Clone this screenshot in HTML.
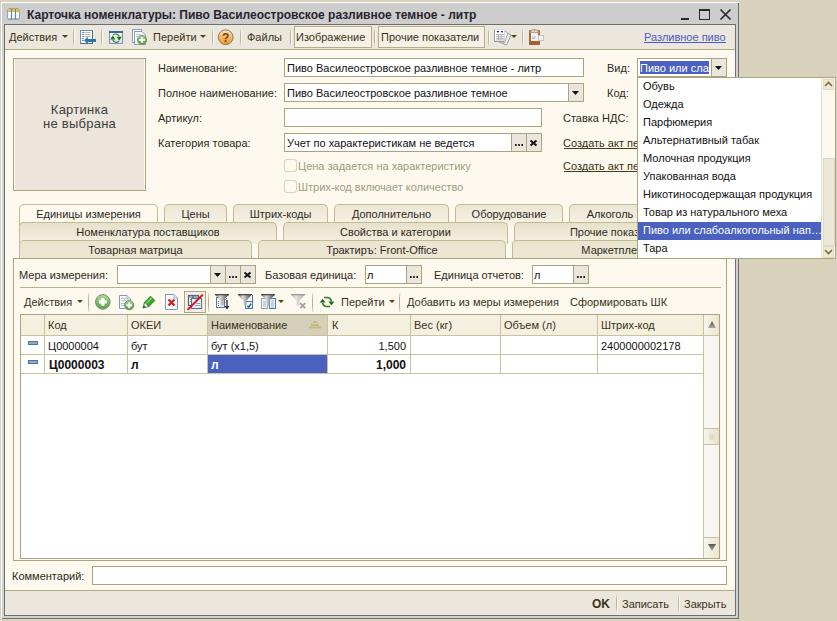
<!DOCTYPE html><html><head><meta charset="utf-8"><style>
html,body{margin:0;padding:0;}
body{width:837px;height:621px;overflow:hidden;position:relative;background:#d8d2bd;font-family:"Liberation Sans",sans-serif;}
.a{position:absolute;}
.t{position:absolute;white-space:nowrap;font-family:"Liberation Sans",sans-serif;color:#2e2a22;}
</style></head><body>
<div class="a" style="left:1px;top:2px;width:738px;height:617px;background:#ffffff;"></div>
<div class="a" style="left:2px;top:3px;width:737px;height:616px;background:#6f6f6f;"></div>
<div class="a" style="left:2px;top:3px;width:736px;height:615px;background:#d0d0d0;"></div>
<div class="a" style="left:2px;top:3px;width:736px;height:21px;background:#cdcdcd;"></div>
<div class="a" style="left:4px;top:24px;width:732px;height:592px;background:#6f6f6f;"></div>
<div class="a" style="left:5px;top:25px;width:730px;height:590px;background:#fdf9ef;"></div>
<svg class="a" style="left:7px;top:8px" width="13" height="12" viewBox="0 0 13 12">
<rect x="0.5" y="0.5" width="12" height="11" rx="1.5" fill="#6b7f93"/>
<rect x="1" y="1" width="3" height="2" fill="#f2c500"/><rect x="5" y="1" width="3" height="2" fill="#f2c500"/><rect x="9" y="1" width="3" height="2" fill="#f2c500"/>
<rect x="1" y="3.5" width="3" height="7" fill="#eef8fb"/><rect x="5" y="3.5" width="3" height="7" fill="#eef8fb"/><rect x="9" y="3.5" width="3" height="7" fill="#eef8fb"/>
</svg>
<div class="t" style="left:27px;top:8px;font-size:12px;line-height:14px;font-weight:bold;color:#26242e;">Карточка номенклатуры: Пиво Василеостровское разливное темное - литр</div>
<div class="a" style="left:681px;top:18px;width:8px;height:2px;background:#2a2a2a;"></div>
<div class="a" style="left:699px;top:9px;width:11px;height:11px;box-shadow:inset 0 0 0 1px #2a2a2a;"></div>
<div class="a" style="left:699px;top:10px;width:11px;height:1px;background:#2a2a2a;"></div>
<svg class="a" style="left:719px;top:8px" width="13" height="13" viewBox="0 0 13 13"><path d="M1.5 1.5 L11.5 11.5 M11.5 1.5 L1.5 11.5" stroke="#2a2a2a" stroke-width="1.7"/></svg>
<div class="a" style="left:5px;top:25px;width:730px;height:24px;background:#ece7dc;"></div>
<div class="a" style="left:5px;top:49px;width:730px;height:1px;background:#b3aa84;"></div>
<div class="t" style="left:9px;top:31px;font-size:11px;line-height:13px;color:#3b3119;">Действия</div>
<svg class="a" style="left:62px;top:35px" width="6" height="3" viewBox="0 0 6 3"><path d="M0 0 H6 L3 3 Z" fill="#5a4208"/></svg>
<div class="a" style="left:73px;top:28px;width:1px;height:19px;background:linear-gradient(#ece7dc,#b9b299 30%,#b9b299 70%,#ece7dc)"></div>
<div class="a" style="left:74px;top:28px;width:1px;height:19px;background:linear-gradient(#ece7dc,#fbf9f3 30%,#fbf9f3 70%,#ece7dc)"></div>
<svg class="a" style="left:80px;top:30px" width="17" height="16" viewBox="0 0 17 16">
<rect x="0.5" y="0.5" width="12" height="13" fill="#fff" stroke="#6b8fb5"/>
<path d="M12.5 0.5 V13.5 H0.5" stroke="#4a6c90" fill="none"/>
<path d="M2 2.5h2M2 4.5h2M2 6.5h2M2 8.5h2M2 10.5h2" stroke="#6a9ac8"/>
<path d="M4.5 2.5h6M4.5 4.5h6M4.5 6.5h6" stroke="#b4b4b4"/>
<path d="M4 10.2 L7.8 6.8 V9 H16 V12 H7.8 V14.5 Z" fill="#2f72ad"/>
</svg>
<div class="a" style="left:101px;top:28px;width:1px;height:19px;background:linear-gradient(#ece7dc,#b9b299 30%,#b9b299 70%,#ece7dc)"></div>
<div class="a" style="left:102px;top:28px;width:1px;height:19px;background:linear-gradient(#ece7dc,#fbf9f3 30%,#fbf9f3 70%,#ece7dc)"></div>
<svg class="a" style="left:109px;top:31px" width="14" height="13" viewBox="0 0 14 13">
<defs><linearGradient id="gr1" x1="0" y1="0" x2="0" y2="1"><stop offset="0" stop-color="#ffffff"/><stop offset="1" stop-color="#d6e3f0"/></linearGradient></defs>
<rect x="0.5" y="0.5" width="13" height="12" fill="url(#gr1)" stroke="#7f95ab"/>
<rect x="0" y="0" width="14" height="2" fill="#2f6b9c"/>
<path d="M4 4.2 A3.8 3.8 0 0 1 10.3 5.5 M10 10.2 A3.8 3.8 0 0 1 3.7 8.8" stroke="#3a8a2a" stroke-width="1.2" fill="none"/>
<path d="M1.2 8.6 L3.8 4.6 L6.4 8.6 Z M7.6 5.8 H12.8 L10.2 9.8 Z" fill="#226f16"/>
</svg>
<svg class="a" style="left:131px;top:28px" width="17" height="18" viewBox="0 0 17 18">
<defs><linearGradient id="gc1" x1="0" y1="0" x2="0" y2="1"><stop offset="0" stop-color="#a6d48e"/><stop offset="1" stop-color="#4a9c36"/></linearGradient></defs>
<rect x="1.5" y="1.5" width="9" height="13" fill="#fff" stroke="#8aa0b8"/>
<path d="M3.5 3.5 H11 L14.5 7 V16.5 H3.5 Z" fill="#f7fafd" stroke="#8aa0b8"/>
<path d="M5 6.5h5M5 8.5h2" stroke="#c4c4c4"/>
<circle cx="11" cy="12" r="4.6" fill="url(#gc1)" stroke="#7b8f74"/>
<path d="M11 9.2v5.6M8.2 12h5.6" stroke="#fff" stroke-width="2"/>
</svg>
<div class="t" style="left:153px;top:31px;font-size:11px;line-height:13px;color:#3b3119;">Перейти</div>
<svg class="a" style="left:200px;top:35px" width="6" height="3" viewBox="0 0 6 3"><path d="M0 0 H6 L3 3 Z" fill="#5a4208"/></svg>
<div class="a" style="left:212px;top:28px;width:1px;height:19px;background:linear-gradient(#ece7dc,#b9b299 30%,#b9b299 70%,#ece7dc)"></div>
<div class="a" style="left:213px;top:28px;width:1px;height:19px;background:linear-gradient(#ece7dc,#fbf9f3 30%,#fbf9f3 70%,#ece7dc)"></div>
<svg class="a" style="left:217px;top:29px" width="17" height="17" viewBox="0 0 17 17">
<defs><linearGradient id="gh" x1="0" y1="0" x2="0" y2="1"><stop offset="0" stop-color="#fde2b0"/><stop offset="0.6" stop-color="#f5b254"/><stop offset="1" stop-color="#ef9a30"/></linearGradient></defs>
<circle cx="8.7" cy="8.2" r="7.4" fill="url(#gh)" stroke="#7a6e6a" stroke-width="0.9"/>
<text x="8.7" y="12.6" font-family="Liberation Sans" font-size="12" font-weight="bold" text-anchor="middle" fill="#6b4220">?</text>
</svg>
<div class="a" style="left:240px;top:28px;width:1px;height:19px;background:linear-gradient(#ece7dc,#b9b299 30%,#b9b299 70%,#ece7dc)"></div>
<div class="a" style="left:241px;top:28px;width:1px;height:19px;background:linear-gradient(#ece7dc,#fbf9f3 30%,#fbf9f3 70%,#ece7dc)"></div>
<div class="t" style="left:247px;top:31px;font-size:11px;line-height:13px;color:#3b3119;">Файлы</div>
<div class="a" style="left:290px;top:28px;width:1px;height:19px;background:linear-gradient(#ece7dc,#b9b299 30%,#b9b299 70%,#ece7dc)"></div>
<div class="a" style="left:291px;top:28px;width:1px;height:19px;background:linear-gradient(#ece7dc,#fbf9f3 30%,#fbf9f3 70%,#ece7dc)"></div>
<div class="a" style="left:294px;top:26px;width:78px;height:22px;background:#f6f1e6;box-shadow:inset 0 0 0 1px #b5ad88;"></div>
<div class="t" style="left:296px;top:31px;font-size:11px;line-height:13px;color:#3b3119;">Изображение</div>
<div class="a" style="left:374px;top:28px;width:1px;height:19px;background:linear-gradient(#ece7dc,#b9b299 30%,#b9b299 70%,#ece7dc)"></div>
<div class="a" style="left:375px;top:28px;width:1px;height:19px;background:linear-gradient(#ece7dc,#fbf9f3 30%,#fbf9f3 70%,#ece7dc)"></div>
<div class="a" style="left:378px;top:26px;width:107px;height:22px;background:#f6f1e6;box-shadow:inset 0 0 0 1px #b5ad88;"></div>
<div class="t" style="left:381px;top:31px;font-size:11px;line-height:13px;color:#3b3119;">Прочие показатели</div>
<div class="a" style="left:488px;top:28px;width:1px;height:19px;background:linear-gradient(#ece7dc,#b9b299 30%,#b9b299 70%,#ece7dc)"></div>
<div class="a" style="left:489px;top:28px;width:1px;height:19px;background:linear-gradient(#ece7dc,#fbf9f3 30%,#fbf9f3 70%,#ece7dc)"></div>
<svg class="a" style="left:494px;top:29px" width="18" height="17" viewBox="0 0 18 17">
<path d="M9 2 L17 6 L12.5 16 L5 13 Z" fill="#f4f4f4" stroke="#9a9a9a"/>
<path d="M9 1 L14 4 L10.5 14 L6 12 Z" fill="#fafafa" stroke="#a8a8a8"/>
<rect x="1" y="0" width="10" height="12.5" fill="#fff"/>
<path d="M0.5 0.5 V12.5 H10.5" stroke="#9b9b9b" fill="none"/>
<path d="M1 0.5 H10.5 V12" stroke="#d8d8d8" fill="none"/>
<rect x="2.8" y="2" width="2.2" height="1.3" fill="#1f2a9a"/><rect x="6.8" y="2" width="2.2" height="1.3" fill="#1f2a9a"/>
<path d="M2 5.5h8M2 7.5h8M2 9.5h8M2 11h8M4.5 5v6M7 5v6" stroke="#a8a8a8" stroke-width="0.8"/>
</svg>
<svg class="a" style="left:511px;top:35px" width="6" height="3" viewBox="0 0 6 3"><path d="M0 0 H6 L3 3 Z" fill="#5a4208"/></svg>
<div class="a" style="left:522px;top:28px;width:1px;height:19px;background:linear-gradient(#ece7dc,#b9b299 30%,#b9b299 70%,#ece7dc)"></div>
<div class="a" style="left:523px;top:28px;width:1px;height:19px;background:linear-gradient(#ece7dc,#fbf9f3 30%,#fbf9f3 70%,#ece7dc)"></div>
<svg class="a" style="left:528px;top:28px" width="18" height="18" viewBox="0 0 18 18">
<defs><linearGradient id="gcl" x1="0" y1="0" x2="0" y2="1"><stop offset="0" stop-color="#b87238"/><stop offset="1" stop-color="#a0602a"/></linearGradient></defs>
<rect x="1" y="2" width="11" height="15" rx="0.8" fill="url(#gcl)"/>
<rect x="3" y="5" width="7" height="8" fill="#f4f4f2"/>
<path d="M2.5 4.6 H10.5 L8.8 1.6 H4.2 Z" fill="#dadada" stroke="#a4a4a4" stroke-width="0.8"/>
<circle cx="6.5" cy="2.4" r="0.8" fill="#d88040"/>
<rect x="10.5" y="7.5" width="5" height="5" fill="#f4f4f4" stroke="#c4c4c4"/>
<path d="M4 9h4M4 10.5h3" stroke="#aaa" stroke-width="0.8"/>
</svg>
<div class="t" style="left:644px;top:31px;font-size:11px;line-height:13px;color:#4a5ccc;">Разливное пиво</div>
<div class="a" style="left:644px;top:42px;width:82px;height:1px;background:#4a5ccc;"></div>
<div class="a" style="left:13px;top:58px;width:133px;height:133px;background:#ebe5db;box-shadow:inset 0 0 0 1px #aaa37f;"></div>
<div class="a" style="left:14px;top:59px;width:1px;height:131px;background:#fcfaf5;"></div>
<div class="a" style="left:144px;top:59px;width:1px;height:131px;background:#fcfaf5;"></div>
<div class="t" style="left:13px;top:103px;width:133px;text-align:center;font-size:13px;line-height:14px;color:#404040;letter-spacing:0.25px">Картинка<br>не выбрана</div>
<div class="t" style="left:158px;top:62px;font-size:11px;line-height:13px;">Наименование:</div>
<div class="t" style="left:158px;top:87px;font-size:11px;line-height:13px;">Полное наименование:</div>
<div class="t" style="left:158px;top:112px;font-size:11px;line-height:13px;">Артикул:</div>
<div class="t" style="left:158px;top:137px;font-size:11px;line-height:13px;">Категория товара:</div>
<div class="a" style="left:284px;top:58px;width:300px;height:19px;background:#fff;box-shadow:inset 0 0 0 1px #aaa37f;"></div>
<div class="t" style="left:287px;top:62px;font-size:11px;line-height:13px;color:#111;">Пиво Василеостровское разливное темное - литр</div>
<div class="a" style="left:284px;top:83px;width:300px;height:19px;background:#fff;box-shadow:inset 0 0 0 1px #aaa37f;"></div>
<div class="a" style="left:568px;top:83px;width:16px;height:19px;background:#ebe6db;box-shadow:inset 0 0 0 1px #aaa37f;"></div>
<svg class="a" style="left:572px;top:91px" width="7" height="4" viewBox="0 0 7 4"><path d="M0 0 H7 L3.5 4 Z" fill="#111"/></svg>
<div class="t" style="left:287px;top:87px;font-size:11px;line-height:13px;color:#111;">Пиво Василеостровское разливное темное</div>
<div class="a" style="left:284px;top:108px;width:258px;height:19px;background:#fff;box-shadow:inset 0 0 0 1px #aaa37f;"></div>
<div class="a" style="left:284px;top:133px;width:258px;height:19px;background:#fff;box-shadow:inset 0 0 0 1px #aaa37f;"></div>
<div class="a" style="left:511px;top:133px;width:16px;height:19px;background:#ebe6db;box-shadow:inset 0 0 0 1px #aaa37f;"></div>
<div class="a" style="left:526px;top:133px;width:16px;height:19px;background:#ebe6db;box-shadow:inset 0 0 0 1px #aaa37f;"></div>
<svg class="a" style="left:514px;top:143px" width="10" height="3" viewBox="0 0 10 3"><rect x="1" y="1" width="1.6" height="2" fill="#111"/><rect x="4.2" y="1" width="1.6" height="2" fill="#111"/><rect x="7.4" y="1" width="1.6" height="2" fill="#111"/></svg>
<svg class="a" style="left:529px;top:139px" width="9" height="8" viewBox="0 0 9 8"><path d="M1.5 1.5 L7.5 6.5 M7.5 1.5 L1.5 6.5" stroke="#111" stroke-width="1.9"/></svg>
<div class="t" style="left:287px;top:137px;font-size:11px;line-height:13px;color:#111;">Учет по характеристикам не ведется</div>
<div class="a" style="left:284px;top:159px;width:13px;height:13px;background:#fdf9ef;box-shadow:inset 0 0 0 1px #d9d3bf;border-radius:3px;"></div>
<div class="a" style="left:284px;top:180px;width:13px;height:13px;background:#fdf9ef;box-shadow:inset 0 0 0 1px #d9d3bf;border-radius:3px;"></div>
<div class="t" style="left:298px;top:160px;font-size:11px;line-height:13px;color:#a39a7e;">Цена задается на характеристику</div>
<div class="t" style="left:298px;top:181px;font-size:11px;line-height:13px;color:#a39a7e;">Штрих-код включает количество</div>
<div class="t" style="left:607px;top:62px;font-size:11px;line-height:13px;">Вид:</div>
<div class="t" style="left:607px;top:87px;font-size:11px;line-height:13px;">Код:</div>
<div class="t" style="left:563px;top:112px;font-size:11px;line-height:13px;">Ставка НДС:</div>
<div class="t" style="left:563px;top:137px;font-size:11px;line-height:13px;color:#3a2e12;">Создать акт переоценки</div>
<div class="a" style="left:564px;top:148px;width:73px;height:1px;background:#4a3a14;"></div>
<div class="t" style="left:563px;top:160px;font-size:11px;line-height:13px;color:#3a2e12;">Создать акт переоценки</div>
<div class="a" style="left:564px;top:171px;width:73px;height:1px;background:#4a3a14;"></div>
<div class="a" style="left:164px;top:204px;width:63px;height:22px;background:linear-gradient(#ebe6d3,#f7f3e7);border:1px solid #c2b995;border-bottom:none;border-radius:5px 5px 0 0;box-sizing:border-box;"></div>
<div class="t" style="left:164px;top:208px;width:63px;text-align:center;font-size:11px;line-height:13px;color:#2e2a22">Цены</div>
<div class="a" style="left:233px;top:204px;width:95px;height:22px;background:linear-gradient(#ebe6d3,#f7f3e7);border:1px solid #c2b995;border-bottom:none;border-radius:5px 5px 0 0;box-sizing:border-box;"></div>
<div class="t" style="left:233px;top:208px;width:95px;text-align:center;font-size:11px;line-height:13px;color:#2e2a22">Штрих-коды</div>
<div class="a" style="left:334px;top:204px;width:115px;height:22px;background:linear-gradient(#ebe6d3,#f7f3e7);border:1px solid #c2b995;border-bottom:none;border-radius:5px 5px 0 0;box-sizing:border-box;"></div>
<div class="t" style="left:334px;top:208px;width:115px;text-align:center;font-size:11px;line-height:13px;color:#2e2a22">Дополнительно</div>
<div class="a" style="left:455px;top:204px;width:108px;height:22px;background:linear-gradient(#ebe6d3,#f7f3e7);border:1px solid #c2b995;border-bottom:none;border-radius:5px 5px 0 0;box-sizing:border-box;"></div>
<div class="t" style="left:455px;top:208px;width:108px;text-align:center;font-size:11px;line-height:13px;color:#2e2a22">Оборудование</div>
<div class="a" style="left:569px;top:204px;width:82px;height:22px;background:linear-gradient(#ebe6d3,#f7f3e7);border:1px solid #c2b995;border-bottom:none;border-radius:5px 5px 0 0;box-sizing:border-box;"></div>
<div class="t" style="left:569px;top:208px;width:82px;text-align:center;font-size:11px;line-height:13px;color:#2e2a22">Алкоголь</div>
<div class="a" style="left:19px;top:204px;width:139px;height:22px;background:#fdf9ef;border:1px solid #c2b995;border-bottom:none;border-radius:5px 5px 0 0;box-sizing:border-box;"></div>
<div class="t" style="left:19px;top:208px;width:139px;text-align:center;font-size:11px;line-height:13px;color:#2e2a22">Единицы измерения</div>
<div class="a" style="left:19px;top:222px;width:258px;height:22px;background:linear-gradient(#e7e1ca,#f5f1e3);border:1px solid #c2b995;border-bottom:none;border-radius:5px 5px 0 0;box-sizing:border-box;"></div>
<div class="t" style="left:19px;top:226px;width:258px;text-align:center;font-size:11px;line-height:13px;color:#2e2a22">Номенклатура поставщиков</div>
<div class="a" style="left:283px;top:222px;width:225px;height:22px;background:linear-gradient(#e7e1ca,#f5f1e3);border:1px solid #c2b995;border-bottom:none;border-radius:5px 5px 0 0;box-sizing:border-box;"></div>
<div class="t" style="left:283px;top:226px;width:225px;text-align:center;font-size:11px;line-height:13px;color:#2e2a22">Свойства и категории</div>
<div class="a" style="left:514px;top:222px;width:210px;height:22px;background:linear-gradient(#e7e1ca,#f5f1e3);border:1px solid #c2b995;border-bottom:none;border-radius:5px 5px 0 0;box-sizing:border-box;"></div>
<div class="t" style="left:514px;top:226px;width:210px;text-align:center;font-size:11px;line-height:13px;color:#2e2a22">Прочие показатели</div>
<div class="a" style="left:19px;top:240px;width:233px;height:22px;background:linear-gradient(#ebe5d0,#ece6d3);border:1px solid #c2b995;border-bottom:none;border-radius:5px 5px 0 0;box-sizing:border-box;"></div>
<div class="t" style="left:19px;top:244px;width:233px;text-align:center;font-size:11px;line-height:13px;color:#2e2a22">Товарная матрица</div>
<div class="a" style="left:258px;top:240px;width:248px;height:22px;background:linear-gradient(#ebe5d0,#ece6d3);border:1px solid #c2b995;border-bottom:none;border-radius:5px 5px 0 0;box-sizing:border-box;"></div>
<div class="t" style="left:258px;top:244px;width:248px;text-align:center;font-size:11px;line-height:13px;color:#2e2a22">Трактиръ: Front-Office</div>
<div class="a" style="left:512px;top:240px;width:214px;height:22px;background:linear-gradient(#ebe5d0,#ece6d3);border:1px solid #c2b995;border-bottom:none;border-radius:5px 5px 0 0;box-sizing:border-box;"></div>
<div class="t" style="left:512px;top:244px;width:214px;text-align:center;font-size:11px;line-height:13px;color:#2e2a22">Маркетплейсы</div>
<div class="a" style="left:13px;top:258px;width:714px;height:303px;background:#fdf9ef;box-shadow:inset 0 0 0 1px #aaa37f;"></div>
<div class="t" style="left:19px;top:269px;font-size:11px;line-height:13px;">Мера измерения:</div>
<div class="a" style="left:117px;top:265px;width:139px;height:19px;background:#fff;box-shadow:inset 0 0 0 1px #aaa37f;"></div>
<div class="a" style="left:210px;top:265px;width:16px;height:19px;background:#ebe6db;box-shadow:inset 0 0 0 1px #aaa37f;"></div>
<div class="a" style="left:225px;top:265px;width:16px;height:19px;background:#ebe6db;box-shadow:inset 0 0 0 1px #aaa37f;"></div>
<div class="a" style="left:240px;top:265px;width:16px;height:19px;background:#ebe6db;box-shadow:inset 0 0 0 1px #aaa37f;"></div>
<svg class="a" style="left:214px;top:273px" width="7" height="4" viewBox="0 0 7 4"><path d="M0 0 H7 L3.5 4 Z" fill="#111"/></svg>
<svg class="a" style="left:228px;top:275px" width="10" height="3" viewBox="0 0 10 3"><rect x="1" y="1" width="1.6" height="2" fill="#111"/><rect x="4.2" y="1" width="1.6" height="2" fill="#111"/><rect x="7.4" y="1" width="1.6" height="2" fill="#111"/></svg>
<svg class="a" style="left:243px;top:271px" width="9" height="8" viewBox="0 0 9 8"><path d="M1.5 1.5 L7.5 6.5 M7.5 1.5 L1.5 6.5" stroke="#111" stroke-width="1.9"/></svg>
<div class="t" style="left:265px;top:269px;font-size:11px;line-height:13px;">Базовая единица:</div>
<div class="a" style="left:365px;top:265px;width:57px;height:19px;background:#fff;box-shadow:inset 0 0 0 1px #aaa37f;"></div>
<div class="a" style="left:406px;top:265px;width:16px;height:19px;background:#ebe6db;box-shadow:inset 0 0 0 1px #aaa37f;"></div>
<svg class="a" style="left:409px;top:275px" width="10" height="3" viewBox="0 0 10 3"><rect x="1" y="1" width="1.6" height="2" fill="#111"/><rect x="4.2" y="1" width="1.6" height="2" fill="#111"/><rect x="7.4" y="1" width="1.6" height="2" fill="#111"/></svg>
<div class="t" style="left:367px;top:269px;font-size:11px;line-height:13px;color:#111;">л</div>
<div class="t" style="left:434px;top:269px;font-size:11px;line-height:13px;">Единица отчетов:</div>
<div class="a" style="left:532px;top:265px;width:57px;height:19px;background:#fff;box-shadow:inset 0 0 0 1px #aaa37f;"></div>
<div class="a" style="left:573px;top:265px;width:16px;height:19px;background:#ebe6db;box-shadow:inset 0 0 0 1px #aaa37f;"></div>
<svg class="a" style="left:576px;top:275px" width="10" height="3" viewBox="0 0 10 3"><rect x="1" y="1" width="1.6" height="2" fill="#111"/><rect x="4.2" y="1" width="1.6" height="2" fill="#111"/><rect x="7.4" y="1" width="1.6" height="2" fill="#111"/></svg>
<div class="t" style="left:534px;top:269px;font-size:11px;line-height:13px;color:#111;">л</div>
<div class="a" style="left:20px;top:287px;width:701px;height:1px;background:#b9b18e;"></div>
<div class="t" style="left:24px;top:296px;font-size:11px;line-height:13px;color:#3b3119;">Действия</div>
<svg class="a" style="left:77px;top:300px" width="6" height="3" viewBox="0 0 6 3"><path d="M0 0 H6 L3 3 Z" fill="#5a4208"/></svg>
<div class="a" style="left:88px;top:293px;width:1px;height:19px;background:linear-gradient(#ece7dc,#b9b299 30%,#b9b299 70%,#ece7dc)"></div>
<div class="a" style="left:89px;top:293px;width:1px;height:19px;background:linear-gradient(#ece7dc,#fbf9f3 30%,#fbf9f3 70%,#ece7dc)"></div>
<svg class="a" style="left:94px;top:293px" width="18" height="18" viewBox="0 0 18 18">
<defs><linearGradient id="gp" x1="0" y1="0" x2="0" y2="1"><stop offset="0" stop-color="#b6dca2"/><stop offset="0.55" stop-color="#74b95c"/><stop offset="1" stop-color="#5aa544"/></linearGradient></defs>
<circle cx="8.8" cy="8.9" r="7.3" fill="url(#gp)" stroke="#7f8b7a" stroke-width="1"/>
<path d="M8.8 5v7.8M4.9 8.9h7.8" stroke="#fff" stroke-width="3.2"/>
</svg>
<svg class="a" style="left:118px;top:294px" width="18" height="17" viewBox="0 0 18 17">
<defs><linearGradient id="gp2" x1="0" y1="0" x2="0" y2="1"><stop offset="0" stop-color="#a6d48e"/><stop offset="1" stop-color="#4a9c36"/></linearGradient></defs>
<path d="M1.5 1.5 H9 L12.5 5 V14.5 H1.5 Z" fill="#f6f9fc" stroke="#7f9cb8"/>
<path d="M9 1.5 V5 H12.5" fill="#d5e2ee" stroke="#9fb5ca"/>
<path d="M3 4.5h5M3 6.5h5M3 9.5h4M3 11.5h4" stroke="#b9c4cf"/>
<circle cx="11.2" cy="11.2" r="4.6" fill="url(#gp2)" stroke="#7b8f74"/>
<path d="M11.2 8.4v5.6M8.4 11.2h5.6" stroke="#fff" stroke-width="2"/>
</svg>
<svg class="a" style="left:141px;top:294px" width="16" height="16" viewBox="0 0 16 16">
<path d="M3.6 8.2 L9.6 2.2 L13.9 6.5 L7.9 12.5 Z" fill="#3da52c" stroke="#237018" stroke-width="0.8"/>
<path d="M5.2 9.6 L11.2 3.6" stroke="#8fe070" stroke-width="1.2"/>
<path d="M3.6 8.2 L7.9 12.5 L2 14 Z" fill="#eaf5e0" stroke="#237018" stroke-width="0.8"/>
<path d="M2 14 L2.8 11.2 L4.8 13.2 Z" fill="#1f5e14"/>
</svg>
<svg class="a" style="left:164px;top:293px" width="16" height="18" viewBox="0 0 16 18">
<path d="M1.5 1.5 H10 L13.5 5 V16.5 H1.5 Z" fill="#f6f9fc" stroke="#7f9cb8"/>
<path d="M10 1.5 V5 H13.5" fill="#d5e2ee" stroke="#9fb5ca"/>
<path d="M4.5 6.5 L10.5 12.5 M10.5 6.5 L4.5 12.5" stroke="#cc2418" stroke-width="2.3"/>
</svg>
<div class="a" style="left:184px;top:291px;width:22px;height:22px;background:#f7f1e4;box-shadow:inset 0 0 0 1px #ada57f;"></div>
<svg class="a" style="left:187px;top:294px" width="17" height="17" viewBox="0 0 17 17">
<rect x="1.5" y="1.5" width="10" height="10" fill="#fff" stroke="#4f6986" stroke-width="1.3"/>
<path d="M2 3h9M6 2v9" stroke="#4f6986" stroke-width="1.2"/>
<path d="M3 5.5h2M3 7.5h2M7 5h3" stroke="#8ea0b4"/>
<rect x="4.5" y="4.5" width="10" height="10" fill="#eef4f9" stroke="#5f7892" stroke-width="1.2"/>
<path d="M9 9.5h4M8 11.5h5" stroke="#8ea0b4"/>
<path d="M0.6 15.8 L15.8 0.6" stroke="#dd1020" stroke-width="2"/>
</svg>
<div class="a" style="left:208px;top:293px;width:1px;height:19px;background:linear-gradient(#ece7dc,#b9b299 30%,#b9b299 70%,#ece7dc)"></div>
<div class="a" style="left:209px;top:293px;width:1px;height:19px;background:linear-gradient(#ece7dc,#fbf9f3 30%,#fbf9f3 70%,#ece7dc)"></div>
<svg class="a" style="left:215px;top:294px" width="17" height="17" viewBox="0 0 17 17"><defs><linearGradient id="gf1" x1="0" y1="0" x2="1" y2="0"><stop offset="0" stop-color="#585858"/><stop offset="0.35" stop-color="#dcdcdc"/><stop offset="0.7" stop-color="#8a8a8a"/><stop offset="1" stop-color="#3c3c3c"/></linearGradient></defs><rect x="1.5" y="3.5" width="8" height="10" fill="#eef5fa" stroke="#5a7896"/><path d="M3 7.5h1M3 9.5h1M3 11.5h1" stroke="#5a7896"/><path d="M0 0.5 H14 L8.6 6.5 V11 Q7 12.4 5.4 11 V6.5 Z" fill="url(#gf1)"/><rect x="0" y="0" width="14" height="1.3" fill="#4a4a4a"/><path d="M12 4 L10 6 M12 6.5 L10 8.5" stroke="#203050" stroke-width="1" stroke-dasharray="1 1"/><path d="M12 6v7" stroke="#203050" stroke-width="1.3"/><path d="M9.5 12 H14.5 L12 15.5 Z" fill="#203050"/></svg>
<svg class="a" style="left:238px;top:294px" width="17" height="17" viewBox="0 0 17 17"><defs><linearGradient id="gf2" x1="0" y1="0" x2="1" y2="0"><stop offset="0" stop-color="#585858"/><stop offset="0.35" stop-color="#dcdcdc"/><stop offset="0.7" stop-color="#8a8a8a"/><stop offset="1" stop-color="#3c3c3c"/></linearGradient></defs><rect x="7.5" y="7.5" width="7" height="7" fill="#f3f8fc" stroke="#3f7fb8"/><path d="M14.5 1 V7.5" stroke="#3f7fb8"/><path d="M0 0.5 H14 L8.6 6.5 V11 Q7 12.4 5.4 11 V6.5 Z" fill="url(#gf2)"/><rect x="0" y="0" width="14" height="1.3" fill="#4a4a4a"/><path d="M9.2 12 L10.6 13.2 L13.2 9.6" stroke="#2a62a0" stroke-width="1.6" fill="none"/></svg>
<svg class="a" style="left:261px;top:294px" width="17" height="17" viewBox="0 0 17 17"><defs><linearGradient id="gf3" x1="0" y1="0" x2="1" y2="0"><stop offset="0" stop-color="#585858"/><stop offset="0.35" stop-color="#dcdcdc"/><stop offset="0.7" stop-color="#8a8a8a"/><stop offset="1" stop-color="#3c3c3c"/></linearGradient></defs><rect x="0.5" y="4.5" width="6" height="10" fill="#f3f6f8" stroke="#a0a0a0"/><rect x="8.5" y="4.5" width="6" height="10" fill="#f0f6fb" stroke="#3f7fb8"/><path d="M2 8h3M2 10h3M2 12h3M10 7h3M10 9h3M10 11h3M10 13h3" stroke="#7f9fc0" stroke-width="0.8"/><path d="M0 0.5 H14 L8.6 6.5 V11 Q7 12.4 5.4 11 V6.5 Z" fill="url(#gf3)"/><rect x="0" y="0" width="14" height="1.3" fill="#4a4a4a"/></svg>
<svg class="a" style="left:278px;top:300px" width="6" height="3" viewBox="0 0 6 3"><path d="M0 0 H6 L3 3 Z" fill="#5a4208"/></svg>
<svg class="a" style="left:291px;top:294px" width="17" height="17" viewBox="0 0 17 17"><defs><linearGradient id="gf4" x1="0" y1="0" x2="1" y2="0"><stop offset="0" stop-color="#b8b8b8"/><stop offset="0.35" stop-color="#e2e2e2"/><stop offset="0.7" stop-color="#c8c8c8"/><stop offset="1" stop-color="#a8a8a8"/></linearGradient></defs><path d="M0 0.5 H14 L8.6 6.5 V11 Q7 12.4 5.4 11 V6.5 Z" fill="url(#gf4)"/><rect x="0" y="0" width="14" height="1.3" fill="#9a9a9a"/><path d="M9.2 9.2 L14.2 14.2 M14.2 9.2 L9.2 14.2" stroke="#b09c9c" stroke-width="1.8"/></svg>
<div class="a" style="left:312px;top:293px;width:1px;height:19px;background:linear-gradient(#ece7dc,#b9b299 30%,#b9b299 70%,#ece7dc)"></div>
<div class="a" style="left:313px;top:293px;width:1px;height:19px;background:linear-gradient(#ece7dc,#fbf9f3 30%,#fbf9f3 70%,#ece7dc)"></div>
<svg class="a" style="left:319px;top:296px" width="16" height="12" viewBox="0 0 16 12">
<path d="M5 1.4 H8 A4.3 4.3 0 0 1 12.4 5.6" stroke="#2a8020" stroke-width="1.5" fill="none"/>
<path d="M9.4 5.6 H15.4 L12.4 9.6 Z" fill="#1f7016"/>
<path d="M11 10.4 H8 A4.3 4.3 0 0 1 3.6 6.6" stroke="#2a8020" stroke-width="1.5" fill="none"/>
<path d="M0.6 6.6 H6.6 L3.6 2.8 Z" fill="#1f7016"/>
</svg>
<div class="t" style="left:341px;top:296px;font-size:11px;line-height:13px;color:#3b3119;">Перейти</div>
<svg class="a" style="left:389px;top:300px" width="6" height="3" viewBox="0 0 6 3"><path d="M0 0 H6 L3 3 Z" fill="#5a4208"/></svg>
<div class="a" style="left:399px;top:293px;width:1px;height:19px;background:linear-gradient(#ece7dc,#b9b299 30%,#b9b299 70%,#ece7dc)"></div>
<div class="a" style="left:400px;top:293px;width:1px;height:19px;background:linear-gradient(#ece7dc,#fbf9f3 30%,#fbf9f3 70%,#ece7dc)"></div>
<div class="t" style="left:407px;top:296px;font-size:11px;line-height:13px;color:#3b3119;">Добавить из меры измерения</div>
<div class="t" style="left:570px;top:296px;font-size:11px;line-height:13px;color:#3b3119;">Сформировать ШК</div>
<div class="a" style="left:20px;top:314px;width:700px;height:245px;background:#ffffff;box-shadow:inset 0 0 0 1px #aaa37f;"></div>
<div class="a" style="left:21px;top:315px;width:698px;height:20px;background:#f4f0df;"></div>
<div class="a" style="left:207px;top:315px;width:120px;height:20px;background:#d5d0ba;"></div>
<div class="a" style="left:21px;top:335px;width:698px;height:1px;background:#c9c1a0;"></div>
<div class="a" style="left:44px;top:315px;width:1px;height:20px;background:#c9c1a0;"></div>
<div class="a" style="left:127px;top:315px;width:1px;height:20px;background:#c9c1a0;"></div>
<div class="a" style="left:207px;top:315px;width:1px;height:20px;background:#c9c1a0;"></div>
<div class="a" style="left:327px;top:315px;width:1px;height:20px;background:#c9c1a0;"></div>
<div class="a" style="left:410px;top:315px;width:1px;height:20px;background:#c9c1a0;"></div>
<div class="a" style="left:500px;top:315px;width:1px;height:20px;background:#c9c1a0;"></div>
<div class="a" style="left:597px;top:315px;width:1px;height:20px;background:#c9c1a0;"></div>
<div class="a" style="left:703px;top:315px;width:1px;height:20px;background:#c9c1a0;"></div>
<div class="a" style="left:44px;top:336px;width:1px;height:37px;background:#c9c1a0;"></div>
<div class="a" style="left:127px;top:336px;width:1px;height:37px;background:#c9c1a0;"></div>
<div class="a" style="left:207px;top:336px;width:1px;height:37px;background:#c9c1a0;"></div>
<div class="a" style="left:327px;top:336px;width:1px;height:37px;background:#c9c1a0;"></div>
<div class="a" style="left:410px;top:336px;width:1px;height:37px;background:#c9c1a0;"></div>
<div class="a" style="left:500px;top:336px;width:1px;height:37px;background:#c9c1a0;"></div>
<div class="a" style="left:597px;top:336px;width:1px;height:37px;background:#c9c1a0;"></div>
<div class="a" style="left:703px;top:336px;width:1px;height:222px;background:#c9c1a0;"></div>
<div class="a" style="left:21px;top:354px;width:682px;height:1px;background:#c9c1a0;"></div>
<div class="a" style="left:21px;top:373px;width:682px;height:1px;background:#c9c1a0;"></div>
<div class="a" style="left:208px;top:355px;width:119px;height:18px;background:#4b61c0;"></div>
<div class="t" style="left:48px;top:319px;font-size:11px;line-height:13px;color:#3b3119;">Код</div>
<div class="t" style="left:131px;top:319px;font-size:11px;line-height:13px;color:#3b3119;">ОКЕИ</div>
<div class="t" style="left:211px;top:319px;font-size:11px;line-height:13px;color:#3b3119;">Наименование</div>
<svg class="a" style="left:309px;top:321px" width="12" height="8" viewBox="0 0 12 8"><rect x="4" y="0" width="4" height="2" fill="#c6b97c"/><rect x="2" y="3" width="8" height="2" fill="#c6b97c"/><rect x="0" y="5.5" width="12" height="2" fill="#c6b97c"/></svg>
<div class="t" style="left:332px;top:319px;font-size:11px;line-height:13px;color:#3b3119;">К</div>
<div class="t" style="left:414px;top:319px;font-size:11px;line-height:13px;color:#3b3119;">Вес (кг)</div>
<div class="t" style="left:504px;top:319px;font-size:11px;line-height:13px;color:#3b3119;">Объем (л)</div>
<div class="t" style="left:601px;top:319px;font-size:11px;line-height:13px;color:#3b3119;">Штрих-код</div>
<div class="a" style="left:28px;top:341px;width:10px;height:4px;background:#86acd2;box-shadow:inset 0 0 0 1px #51729a;"></div>
<div class="a" style="left:28px;top:360px;width:10px;height:4px;background:#86acd2;box-shadow:inset 0 0 0 1px #51729a;"></div>
<div class="t" style="left:48px;top:340px;font-size:11px;line-height:13px;color:#111;">Ц0000004</div>
<div class="t" style="left:131px;top:340px;font-size:11px;line-height:13px;color:#111;">бут</div>
<div class="t" style="left:211px;top:340px;font-size:11px;line-height:13px;color:#111;">бут (x1,5)</div>
<div class="t" style="left:330px;top:340px;width:76px;text-align:right;font-size:11px;line-height:13px;color:#111">1,500</div>
<div class="t" style="left:601px;top:340px;font-size:11px;line-height:13px;color:#111;">2400000002178</div>
<div class="t" style="left:49px;top:358px;font-size:12px;line-height:14px;font-weight:bold;color:#111;">Ц0000003</div>
<div class="t" style="left:131px;top:358px;font-size:12px;line-height:14px;font-weight:bold;color:#111;">л</div>
<div class="t" style="left:211px;top:358px;font-size:12px;line-height:14px;font-weight:bold;color:#fff;">л</div>
<div class="t" style="left:330px;top:358px;width:76px;text-align:right;font-size:12px;line-height:14px;font-weight:bold;color:#111">1,000</div>
<div class="a" style="left:704px;top:336px;width:15px;height:222px;background:#f8f6f0;"></div>
<div class="a" style="left:704px;top:315px;width:15px;height:20px;background:linear-gradient(90deg,#f7f5ec,#ebe6d0)"></div>
<svg class="a" style="left:708px;top:321px" width="8" height="7" viewBox="0 0 8 7"><defs><linearGradient id="ga" x1="0" y1="0" x2="0" y2="1"><stop offset="0" stop-color="#555"/><stop offset="1" stop-color="#aaa"/></linearGradient></defs><path d="M4 0 L8 7 H0 Z" fill="url(#ga)"/></svg>
<div class="a" style="left:704px;top:428px;width:15px;height:1px;background:#c9c1a0;"></div>
<div class="a" style="left:704px;top:444px;width:15px;height:1px;background:#c9c1a0;"></div>
<div class="a" style="left:704px;top:429px;width:15px;height:15px;background:linear-gradient(90deg,#f7f5ec,#e6e0c6)"></div>
<svg class="a" style="left:708px;top:433px" width="8" height="8" viewBox="0 0 8 8"><circle cx="4" cy="4" r="3" fill="#e0dccd"/></svg>
<div class="a" style="left:704px;top:537px;width:15px;height:1px;background:#c9c1a0;"></div>
<div class="a" style="left:704px;top:538px;width:15px;height:20px;background:linear-gradient(90deg,#f7f5ec,#ebe6d0)"></div>
<svg class="a" style="left:708px;top:544px" width="8" height="7" viewBox="0 0 8 7"><defs><linearGradient id="gb" x1="0" y1="0" x2="0" y2="1"><stop offset="0" stop-color="#555"/><stop offset="1" stop-color="#aaa"/></linearGradient></defs><path d="M0 0 H8 L4 7 Z" fill="url(#gb)"/></svg>
<div class="t" style="left:12px;top:570px;font-size:11px;line-height:13px;">Комментарий:</div>
<div class="a" style="left:92px;top:566px;width:635px;height:19px;background:#fff;box-shadow:inset 0 0 0 1px #aaa37f;"></div>
<div class="a" style="left:5px;top:590px;width:730px;height:1px;background:#b3aa84;"></div>
<div class="a" style="left:5px;top:591px;width:730px;height:24px;background:#ece7dc;"></div>
<div class="t" style="left:592px;top:597px;font-size:12px;line-height:14px;font-weight:bold;color:#3b3119;">OK</div>
<div class="a" style="left:616px;top:594px;width:1px;height:19px;background:linear-gradient(#ece7dc,#b9b299 30%,#b9b299 70%,#ece7dc)"></div>
<div class="a" style="left:617px;top:594px;width:1px;height:19px;background:linear-gradient(#ece7dc,#fbf9f3 30%,#fbf9f3 70%,#ece7dc)"></div>
<div class="t" style="left:622px;top:598px;font-size:11px;line-height:13px;color:#3b3119;">Записать</div>
<div class="a" style="left:678px;top:594px;width:1px;height:19px;background:linear-gradient(#ece7dc,#b9b299 30%,#b9b299 70%,#ece7dc)"></div>
<div class="a" style="left:679px;top:594px;width:1px;height:19px;background:linear-gradient(#ece7dc,#fbf9f3 30%,#fbf9f3 70%,#ece7dc)"></div>
<div class="t" style="left:684px;top:598px;font-size:11px;line-height:13px;color:#3b3119;">Закрыть</div>
<div class="a" style="left:637px;top:58px;width:90px;height:19px;background:#fff;box-shadow:inset 0 0 0 1px #aaa37f;"></div>
<div class="a" style="left:640px;top:61px;width:69px;height:13px;background:#4b61c0;"></div>
<div class="t" style="left:640px;top:62px;width:69px;overflow:hidden;font-size:11px;line-height:13px;color:#fff">Пиво или слабоалкогольный</div>
<div class="a" style="left:711px;top:58px;width:16px;height:19px;background:#ebe6db;box-shadow:inset 0 0 0 1px #aaa37f;"></div>
<svg class="a" style="left:715px;top:66px" width="7" height="4" viewBox="0 0 7 4"><path d="M0 0 H7 L3.5 4 Z" fill="#111"/></svg>
<div class="a" style="left:637px;top:77px;width:199px;height:182px;background:#fff;box-shadow:inset 0 0 0 1px #aaa37f;"></div>
<div class="t" style="left:643px;top:80px;font-size:11px;line-height:13px;color:#111;">Обувь</div>
<div class="t" style="left:643px;top:98px;font-size:11px;line-height:13px;color:#111;">Одежда</div>
<div class="t" style="left:643px;top:116px;font-size:11px;line-height:13px;color:#111;">Парфюмерия</div>
<div class="t" style="left:643px;top:134px;font-size:11px;line-height:13px;color:#111;">Альтернативный табак</div>
<div class="t" style="left:643px;top:152px;font-size:11px;line-height:13px;color:#111;">Молочная продукция</div>
<div class="t" style="left:643px;top:170px;font-size:11px;line-height:13px;color:#111;">Упакованная вода</div>
<div class="t" style="left:643px;top:188px;font-size:11px;line-height:13px;color:#111;">Никотиносодержащая продукция</div>
<div class="t" style="left:643px;top:206px;font-size:11px;line-height:13px;color:#111;">Товар из натурального меха</div>
<div class="a" style="left:638px;top:222px;width:184px;height:18px;background:#4b61c0;"></div>
<div class="t" style="left:643px;top:224px;font-size:11px;line-height:13px;color:#fff;">Пиво или слабоалкогольный нап…</div>
<div class="t" style="left:643px;top:242px;font-size:11px;line-height:13px;color:#111;">Тара</div>
<div class="a" style="left:822px;top:78px;width:13px;height:180px;background:#fbf9ee;"></div>
<div class="a" style="left:821px;top:78px;width:1px;height:180px;background:#e4dfcc;"></div>
<div class="a" style="left:823px;top:79px;width:11px;height:11px;background:#ece7d6;box-shadow:inset 0 0 0 1px #e0dac2;"></div>
<svg class="a" style="left:824px;top:81px" width="9" height="6" viewBox="0 0 9 6"><path d="M1 5 L4.5 1.5 L8 5" stroke="#7d6b3a" stroke-width="1.6" fill="none"/></svg>
<div class="a" style="left:823px;top:158px;width:12px;height:88px;background:#ebe7d9;box-shadow:inset 0 0 0 1px #dcd6c2;"></div>
<div class="a" style="left:823px;top:246px;width:11px;height:12px;background:#ece7d6;box-shadow:inset 0 0 0 1px #e0dac2;"></div>
<svg class="a" style="left:824px;top:249px" width="9" height="6" viewBox="0 0 9 6"><path d="M1 1 L4.5 4.5 L8 1" stroke="#7d6b3a" stroke-width="1.6" fill="none"/></svg>
</body></html>
